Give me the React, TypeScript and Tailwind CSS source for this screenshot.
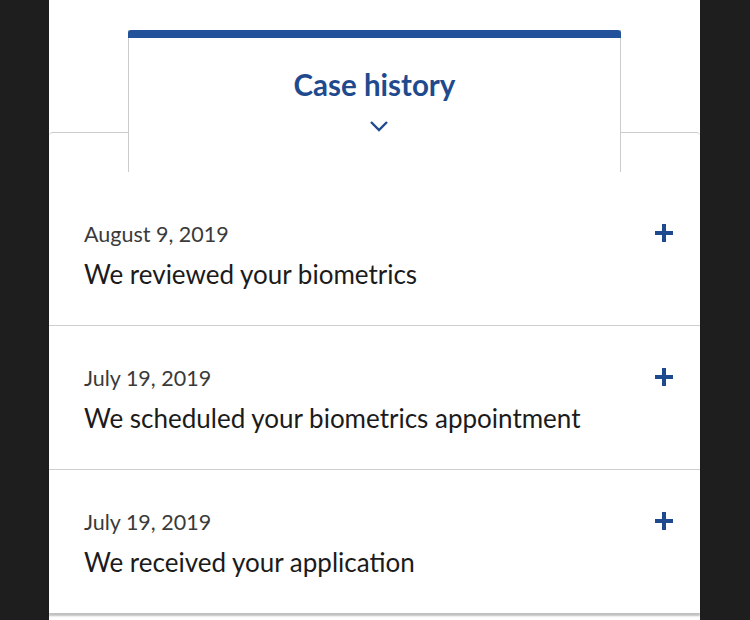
import * as React from "react"

const events = [
  { date: "August 9, 2019", title: "We reviewed your biometrics" },
  { date: "July 19, 2019", title: "We scheduled your biometrics appointment" },
  { date: "July 19, 2019", title: "We received your application" },
]

const Plus = () => (
  <svg width="20" height="20" viewBox="0 0 20 20" className="shrink-0">
    <path d="M10 1v18M1 10h18" stroke="#1f4b8e" strokeWidth="4" />
  </svg>
)

const App = () => {
  return (
    <div className="flex h-[620px] w-[750px] overflow-hidden bg-[#1e1e1e] font-['Lato',sans-serif]">
      <div className="w-[49px] shrink-0" />
      <main className="w-[651px] shrink-0 bg-white pt-[30px]">
        {/* tab sits over the card's top edge */}
        <div className="relative z-10 mx-[79px] -mb-[40px] flex h-[142px] flex-col items-center border-x border-[#cccccc] bg-white">
          <div className="-mx-px h-[8px] w-[calc(100%+2px)] rounded-t-[3px] bg-[#22539a]" />
          <h2 className="mt-[29px] text-[29.5px] font-bold leading-[36px] text-[#1f4b8e]">Case history</h2>
          <svg width="20" height="12" viewBox="0 0 20 12" className="ml-[8px] mt-[17px]">
            <path d="M2 2l8 8 8-8" fill="none" stroke="#1f4b8e" strokeWidth="2.4" />
          </svg>
        </div>
        <section className="rounded-t-[4px] border-t border-[#cccccc] bg-white pt-[49px] shadow-[0_3px_2px_rgba(0,0,0,0.25)]">
          {events.map((e, i) => (
            <div
              key={i}
              className={`flex items-start justify-between pl-[35px] pr-[26px] pt-[39px] pb-[35px] ${i < events.length - 1 ? "border-b border-[#cfcfcf]" : ""}`}
            >
              <div>
                <p className="text-[21.5px] leading-[26px] text-[#3a3a3a]">{e.date}</p>
                <p className="mt-[11px] text-[26px] leading-[32px] text-[#1b1b1b]">{e.title}</p>
              </div>
              <div className="mt-[2px]"><Plus /></div>
            </div>
          ))}
        </section>
      </main>
      <div className="flex-1" />
    </div>
  )
}

export default App
